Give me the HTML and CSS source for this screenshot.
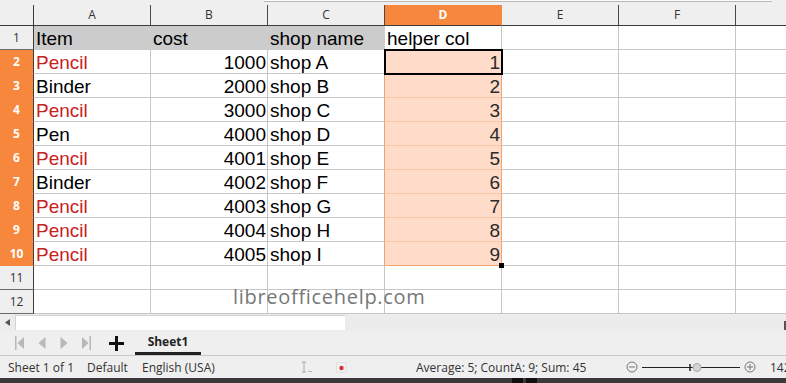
FILE: index.html
```html
<!DOCTYPE html>
<html lang="en">

<head>
    <meta charset="UTF-8">
    <title>Sheet1 - LibreOffice Calc</title>
    <link rel="stylesheet" href="styles.css">
</head>

<body>
    <div class="top"><div></div></div>

    <div class="sheet">
        <!-- column headers -->
        <div class="corner"></div>
        <div class="ch">A</div>
        <div class="ch">B</div>
        <div class="ch">C</div>
        <div class="ch sel">D</div>
        <div class="ch">E</div>
        <div class="ch">F</div>
        <div class="ch last"></div>

        <!-- row 1 -->
        <div class="rh">1</div>
        <div class="c g">Item</div>
        <div class="c g">cost</div>
        <div class="c g">shop name</div>
        <div class="c">helper col</div>
        <div class="c"></div><div class="c"></div><div class="c last"></div>

        <div class="rh sel">2</div>
        <div class="c red">Pencil</div>
        <div class="c num">1000</div>
        <div class="c edge">shop A</div>
        <div class="c num hl cur">1</div>
        <div class="c"></div><div class="c"></div><div class="c last"></div>

        <div class="rh sel">3</div>
        <div class="c">Binder</div>
        <div class="c num">2000</div>
        <div class="c edge">shop B</div>
        <div class="c num hl">2</div>
        <div class="c"></div><div class="c"></div><div class="c last"></div>

        <div class="rh sel">4</div>
        <div class="c red">Pencil</div>
        <div class="c num">3000</div>
        <div class="c edge">shop C</div>
        <div class="c num hl">3</div>
        <div class="c"></div><div class="c"></div><div class="c last"></div>

        <div class="rh sel">5</div>
        <div class="c">Pen</div>
        <div class="c num">4000</div>
        <div class="c edge">shop D</div>
        <div class="c num hl">4</div>
        <div class="c"></div><div class="c"></div><div class="c last"></div>

        <div class="rh sel">6</div>
        <div class="c red">Pencil</div>
        <div class="c num">4001</div>
        <div class="c edge">shop E</div>
        <div class="c num hl">5</div>
        <div class="c"></div><div class="c"></div><div class="c last"></div>

        <div class="rh sel">7</div>
        <div class="c">Binder</div>
        <div class="c num">4002</div>
        <div class="c edge">shop F</div>
        <div class="c num hl">6</div>
        <div class="c"></div><div class="c"></div><div class="c last"></div>

        <div class="rh sel">8</div>
        <div class="c red">Pencil</div>
        <div class="c num">4003</div>
        <div class="c edge">shop G</div>
        <div class="c num hl">7</div>
        <div class="c"></div><div class="c"></div><div class="c last"></div>

        <div class="rh sel">9</div>
        <div class="c red">Pencil</div>
        <div class="c num">4004</div>
        <div class="c edge">shop H</div>
        <div class="c num hl">8</div>
        <div class="c"></div><div class="c"></div><div class="c last"></div>

        <div class="rh sel">10</div>
        <div class="c red">Pencil</div>
        <div class="c num">4005</div>
        <div class="c edge">shop I</div>
        <div class="c num hl end fill">9</div>
        <div class="c"></div><div class="c"></div><div class="c last"></div>

        <div class="rh">11</div>
        <div class="c"></div><div class="c"></div><div class="c"></div><div class="c"></div>
        <div class="c"></div><div class="c"></div><div class="c last"></div>

        <div class="rh">12</div>
        <div class="c"></div><div class="c"></div><div class="c"></div><div class="c"></div>
        <div class="c"></div><div class="c"></div><div class="c last"></div>
    </div>

    <div class="wm">libreofficehelp.com</div>

    <div class="hscroll">
        <div class="sbtn">
            <svg width="5" height="7" viewBox="0 0 5 7"><path d="M5 0 L0 3.5 L5 7 Z" fill="#555"/></svg>
        </div>
        <div class="track"></div>
        <div class="sb-end"></div>
    </div>

    <div class="tabs">
        <div class="nav">
            <svg width="10" height="14" viewBox="0 0 10 14"><rect x="0" y="0" width="1.5" height="14" fill="#b8b8b8"/><path d="M9 1 L2.5 7 L9 13 Z" fill="#b8b8b8"/></svg>
        </div>
        <div class="nav">
            <svg width="8" height="14" viewBox="0 0 8 14"><path d="M7.5 1 L0.5 7 L7.5 13 Z" fill="#b8b8b8"/></svg>
        </div>
        <div class="nav">
            <svg width="8" height="14" viewBox="0 0 8 14"><path d="M0.5 1 L7.5 7 L0.5 13 Z" fill="#b8b8b8"/></svg>
        </div>
        <div class="nav">
            <svg width="10" height="14" viewBox="0 0 10 14"><path d="M1 1 L7.5 7 L1 13 Z" fill="#b8b8b8"/><rect x="8.5" y="0" width="1.5" height="14" fill="#b8b8b8"/></svg>
        </div>
        <div class="add">
            <svg width="15" height="15" viewBox="0 0 15 15"><path d="M7.5 0 V15 M0 7.5 H15" stroke="#111" stroke-width="3"/></svg>
        </div>
        <div class="tab">Sheet1</div>
    </div>

    <div class="status">
        <div class="f1">Sheet 1 of 1</div>
        <div class="f2">Default</div>
        <div class="f3">English (USA)</div>
        <div class="f4">
            <svg width="16" height="12" viewBox="0 0 16 12"><path d="M3 1 H7 M5 1 V11 M3 11 H7" stroke="#a8a8a8" stroke-width="1" fill="none"/><path d="M9 10.5 H13" stroke="#b8b8b8" stroke-width="1"/></svg>
        </div>
        <div class="f5">
            <svg width="11" height="11" viewBox="0 0 11 11"><rect x="0.5" y="0.5" width="10" height="10" fill="none" stroke="#e2e2e2"/><circle cx="5.5" cy="6" r="2.2" fill="#d9303a"/></svg>
        </div>
        <div class="f6"></div>
        <div class="f7">Average: 5; CountA: 9; Sum: 45</div>
        <div class="f8">
            <svg width="142" height="16" viewBox="0 0 142 16">
                <circle cx="12" cy="8" r="5" fill="none" stroke="#777"/>
                <path d="M9 8 H15" stroke="#777"/>
                <path d="M22 8.5 H120" stroke="#222"/>
                <path d="M70 5 V12" stroke="#222" stroke-width="1.5"/>
                <circle cx="77" cy="8.5" r="4" fill="#d5d5d5" stroke="#aaa"/>
                <circle cx="130" cy="8" r="5" fill="none" stroke="#777"/>
                <path d="M127 8 H133 M130 5 V11" stroke="#777"/>
            </svg>
        </div>
        <div class="f9">142%</div>
    </div>

    <div class="bottom">
        <div class="blk"></div>
        <div class="blk"></div>
    </div>
</body>

</html>
```

FILE: styles.css
```css
* {
    box-sizing: border-box;
}

body {
    margin: 0;
    width: 786px;
    height: 383px;
    overflow: hidden;
    position: relative;
    background: #efefef;
    font-family: "Open Sans", "Noto Sans", sans-serif;
    color: #333;
}

/* strip left over from the formula bar */
.top {
    height: 5px;
}

.top div {
    margin-left: 264px;
    width: 508px;
    height: 2px;
    background: #fbfbfb;
    border-bottom: 1px solid #b9b9b9;
}

/* grid */
.sheet {
    display: grid;
    grid-template-columns: 34px repeat(6, 117px) 50px;
    grid-template-rows: 21px repeat(12, 24px);
    background: #fff;
}

.corner {
    background: #efefef;
    border-right: 1px solid #3c3c3c;
    border-bottom: 1px solid #3c3c3c;
}

.ch {
    background: #efefef;
    border-right: 1px solid #4a4a4a;
    border-bottom: 1px solid #3c3c3c;
    font-size: 12px;
    line-height: 20px;
    text-align: center;
    color: #333;
}

.ch.sel {
    background: #f7873c;
    border-right-color: #f7873c;
    color: #fff;
    font-weight: 700;
}

.ch.last {
    border-right: none;
}

.rh {
    background: #efefef;
    border-right: 1px solid #3c3c3c;
    border-bottom: 1px solid #6a6a6a;
    font-size: 12px;
    line-height: 23px;
    text-align: center;
    color: #333;
}

.rh.sel {
    background: #f7873c;
    border-bottom-color: #f7873c;
    color: #fff;
    font-weight: 700;
}

.c {
    border-right: 1px solid #c6c6c6;
    border-bottom: 1px solid #c6c6c6;
    padding: 1px 1px 0 2px;
    font-family: "Liberation Sans", Arial, sans-serif;
    font-size: 19px;
    line-height: 24px;
    white-space: nowrap;
    color: #000;
}

.c.last {
    border-right: none;
}

.g {
    background: #cccccc;
    border-color: #cccccc;
}

.red {
    color: #c9211e;
}

.num {
    text-align: right;
}

.edge {
    border-right-color: #f4a16d;
}

.hl {
    background: #ffdbca;
    border-right-color: #f4a16d;
    border-bottom-color: #f8c7aa;
    color: #2a2a2a;
}

.hl.end {
    border-bottom-color: #f4a16d;
}

.cur {
    position: relative;
    z-index: 1;
    outline: 2px solid #000;
    outline-offset: -1px;
}

.fill {
    position: relative;
    z-index: 2;
}

.fill::after {
    content: "";
    position: absolute;
    right: -3px;
    bottom: -3px;
    width: 5px;
    height: 5px;
    background: #000;
}

/* watermark over the grid */
.wm {
    position: absolute;
    left: 233px;
    top: 287px;
    font-size: 20px;
    line-height: 20px;
    letter-spacing: 0.7px;
    color: #777;
}

/* horizontal scrollbar */
.hscroll {
    height: 17px;
    display: flex;
    align-items: center;
    background: #ececec;
}

.sbtn {
    width: 15px;
    display: flex;
    justify-content: center;
}

.track {
    width: 330px;
    height: 15px;
    background: #fff;
    border-top: 1px solid #d4d4d4;
    border-left: 1px solid #d4d4d4;
}

.sb-end {
    margin-left: auto;
    width: 2px;
    height: 9px;
    margin-top: 6px;
    background: #555;
}

/* sheet tabs */
.tabs {
    height: 24px;
    display: flex;
    align-items: stretch;
    padding-left: 9px;
}

.nav {
    width: 22px;
    display: flex;
    align-items: center;
    justify-content: center;
}

.add {
    width: 38px;
    display: flex;
    align-items: center;
    justify-content: center;
}

.tab {
    width: 66px;
    border-bottom: 3px solid #222;
    font-size: 12px;
    font-weight: 700;
    line-height: 21px;
    text-align: center;
    color: #222;
}

/* status bar */
.status {
    height: 23px;
    display: flex;
    align-items: center;
    border-top: 1px solid #c9c9c9;
    font-size: 12px;
    color: #333;
    white-space: nowrap;
}

.status > div {
    display: flex;
    align-items: center;
    flex-shrink: 0;
}

.f1 {
    width: 80px;
    padding-left: 8px;
}

.f2 {
    width: 54px;
    padding-left: 7px;
}

.f3 {
    width: 156px;
    padding-left: 8px;
}

.f4 {
    width: 40px;
    padding-left: 9px;
}

.f5 {
    width: 25px;
    padding-left: 6px;
}

.f6 {
    width: 50px;
}

.f7 {
    width: 215px;
    padding-left: 11px;
}

.f8 {
    width: 145px;
    padding-left: 0;
}

.f9 {
    padding-left: 5px;
}

.bottom {
    height: 5px;
    background: #3a3a3a;
    display: flex;
    padding-left: 512px;
    gap: 3px;
}

.blk {
    width: 11px;
    background: #111;
}
```
